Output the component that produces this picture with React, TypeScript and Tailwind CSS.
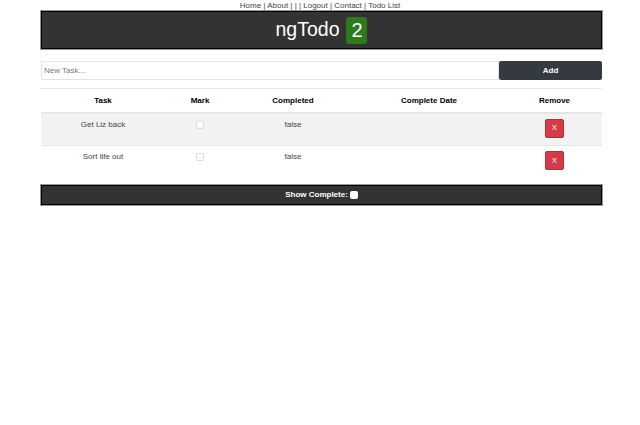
import React, { useState } from 'react';

type Todo = {
  id: number;
  task: string;
  completed: boolean;
  date: string;
};

const App: React.FC = () => {
  const [todos, setTodos] = useState<Todo[]>([
    { id: 1, task: 'Get Liz back', completed: false, date: '' },
    { id: 2, task: 'Sort life out', completed: false, date: '' },
  ]);
  const [newTask, setNewTask] = useState('');
  const [showComplete, setShowComplete] = useState(false);

  const addTodo = () => {
    if (!newTask.trim()) return;
    setTodos([...todos, { id: Date.now(), task: newTask, completed: false, date: '' }]);
    setNewTask('');
  };

  const toggle = (id: number) =>
    setTodos(todos.map((t) => (t.id === id ? { ...t, completed: !t.completed } : t)));

  const remove = (id: number) => setTodos(todos.filter((t) => t.id !== id));

  const visible = showComplete ? todos : todos.filter((t) => !t.completed);

  return (
    <div className="min-h-[425px] bg-white font-['Liberation_Sans',Arial,sans-serif] text-[#333]">
      <nav className="h-[11px] text-center text-[8px] leading-[11px] text-[#444]">
        Home | About | | | Logout | Contact | Todo List
      </nav>

      <div className="ml-[41px] w-[561px]">
        <header className="flex h-[38px] items-center justify-center gap-[7px] border border-black bg-[#333] outline outline-1 outline-[#999]">
          <span className="text-[19.5px] leading-none text-white">ngTodo</span>
          <span className="flex h-[27px] w-[21px] items-center justify-center rounded-[3px] bg-[#2d7a1e] text-[20px] leading-none text-white">
            2
          </span>
        </header>

        <div className="mt-[12px] flex h-[19px]">
          <input
            value={newTask}
            onChange={(e) => setNewTask(e.target.value)}
            placeholder="New Task..."
            className="h-full flex-1 border border-[#e3e3e3] px-[2px] text-[8px] text-[#333] outline-none placeholder:text-[#777]"
          />
          <button
            onClick={addTodo}
            className="h-full w-[103px] rounded-[2px] bg-[#343a40] text-[8px] font-bold text-white"
          >
            Add
          </button>
        </div>

        <table className="mt-[8px] w-full table-fixed border-collapse text-[8px]">
          <colgroup>
            <col className="w-[124px]" />
            <col className="w-[70px]" />
            <col className="w-[116px]" />
            <col className="w-[156px]" />
            <col className="w-[95px]" />
          </colgroup>
          <thead>
            <tr className="h-[24px] border-t border-[#e6e6e6] border-b-[2px] border-b-[#e6e6e6]">
              <th className="pt-[1px] text-center font-bold text-black">Task</th>
              <th className="pt-[1px] text-center font-bold text-black">Mark</th>
              <th className="pt-[1px] text-center font-bold text-black">Completed</th>
              <th className="pt-[1px] text-center font-bold text-black">Complete Date</th>
              <th className="pt-[1px] text-center font-bold text-black">Remove</th>
            </tr>
          </thead>
          <tbody>
            {visible.map((t, i) => (
              <tr
                key={t.id}
                className={`h-[33px] border-b border-[#e6e6e6] last:border-b-0 ${i % 2 === 0 ? 'bg-[#f2f2f2]' : 'bg-white'}`}
              >
                <td className="pt-[6px] align-top text-center leading-[10px] text-[#444]">{t.task}</td>
                <td className="pt-[7px] align-top text-center">
                  <input
                    type="checkbox"
                    checked={t.completed}
                    onChange={() => toggle(t.id)}
                    className="h-[8px] w-[8px] appearance-none rounded-[1px] border border-[#ddd] bg-white"
                  />
                </td>
                <td className="pt-[6px] align-top text-center leading-[10px] text-[#444]">
                  {String(t.completed)}
                </td>
                <td className="pt-[6px] align-top text-center leading-[10px] text-[#444]">{t.date}</td>
                <td className="pt-[5px] align-top text-center">
                  <button
                    onClick={() => remove(t.id)}
                    className="h-[19px] w-[19px] rounded-[2px] border border-[#b52b37] bg-[#d43a47] text-[8px] leading-none text-white"
                  >
                    X
                  </button>
                </td>
              </tr>
            ))}
          </tbody>
        </table>

        <footer className="mt-[6px] flex h-[20px] items-center justify-center gap-[2px] border border-black bg-[#333] outline outline-1 outline-[#999]">
          <span className="text-[8px] font-bold text-white">Show Complete:</span>
          <input
            type="checkbox"
            checked={showComplete}
            onChange={(e) => setShowComplete(e.target.checked)}
            className="h-[8px] w-[8px] appearance-none rounded-[2px] bg-white"
          />
        </footer>
      </div>
    </div>
  );
};

export default App;
